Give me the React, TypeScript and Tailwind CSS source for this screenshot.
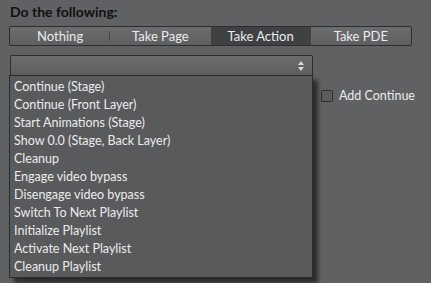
const segments = ['Nothing', 'Take Page', 'Take Action', 'Take PDE'];

const actions = [
  'Continue (Stage)',
  'Continue (Front Layer)',
  'Start Animations (Stage)',
  'Show 0.0 (Stage, Back Layer)',
  'Cleanup',
  'Engage video bypass',
  'Disengage video bypass',
  'Switch To Next Playlist',
  'Initialize Playlist',
  'Activate Next Playlist',
  'Cleanup Playlist',
];

export default function App() {
  return (
    <div className="h-[283px] w-[431px] overflow-hidden bg-[#5f6163] font-['Lato',sans-serif] text-[13px] text-[#ececec]">
      <div className="px-[10px] pt-[3px]">
        <h2 className="text-[14px] font-bold leading-[18px] text-[#101112]">Do the following:</h2>
        <div className="mt-[5px] flex h-[20px] w-[403px] -translate-x-px overflow-hidden rounded-[2px] border border-[#2c2e30] bg-gradient-to-b from-[#6b6d6f] to-[#5d5f61]">
          {segments.map((s, i) => (
            <div
              key={s}
              className={
                i === 2
                  ? 'flex flex-1 items-center justify-center bg-[#3f4143] leading-none'
                  : i === 3
                    ? 'flex flex-1 items-center justify-center leading-none'
                    : 'relative flex flex-1 items-center justify-center leading-none'
              }
            >
              {s}
              {i === 0 && <span className="absolute right-0 top-[4px] h-[10px] w-px bg-[#45474a]" />}
            </div>
          ))}
        </div>
        <div className="mt-[9px] flex items-start">
          <div className="relative w-[303px]">
            <div className="flex h-[21px] items-center justify-end rounded-t-[2px] border border-[#2c2e30] bg-gradient-to-b from-[#6a6c6e] to-[#5c5e60] pr-[8px]">
              <svg width="6" height="10" viewBox="0 0 6 10">
                <path d="M3 0 L6 4 H0 Z" fill="#d8d8d8" />
                <path d="M3 10 L6 6 H0 Z" fill="#d8d8d8" />
              </svg>
            </div>
            <ul className="absolute left-[-1px] top-[20px] w-[304px] border border-[#2a2c2e] bg-[#585a5c] pb-px pt-[2px] text-[12.5px] shadow-[5px_5px_4px_rgba(0,0,0,0.55)]">
              {actions.map((a) => (
                <li key={a} className="h-[18px] pl-[4px] leading-[18px]">
                  {a}
                </li>
              ))}
            </ul>
          </div>
          <label className="ml-[8px] mt-[35px] flex items-center gap-[6px] text-[12.5px]">
            <span className="h-[12px] w-[12px] rounded-[2px] border border-[#2c2e30] bg-[#5a5c5e]" />
            <span className="leading-none">Add Continue</span>
          </label>
        </div>
      </div>
    </div>
  );
}
